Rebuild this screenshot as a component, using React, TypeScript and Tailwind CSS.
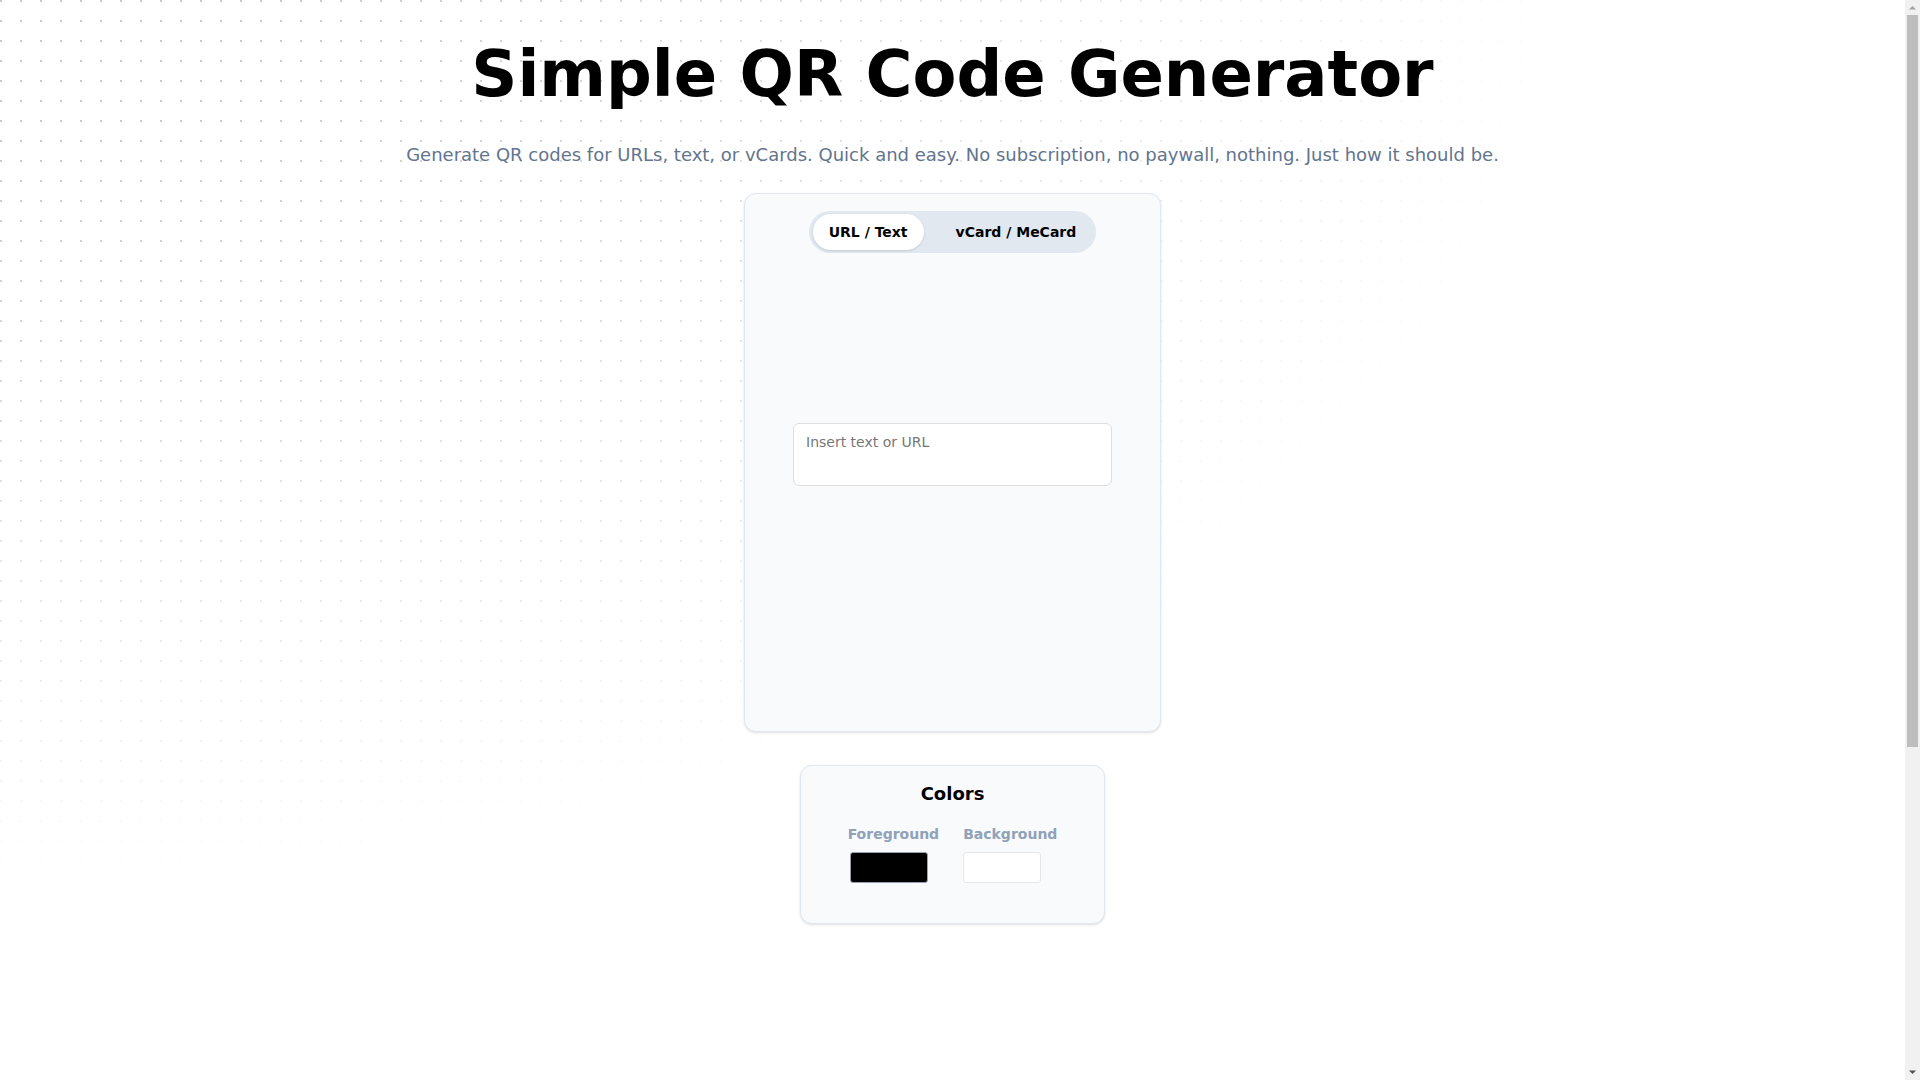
import { useState } from "react";

function ScrollRail() {
  return (
    <div className="flex h-screen w-[15px] shrink-0 flex-col items-center bg-[#f1f1f1]">
      <svg width="15" height="15" viewBox="0 0 15 15" className="shrink-0">
        <path d="M4 9.5 7.5 6 11 9.5Z" fill="#a3a3a3" />
      </svg>
      <div className="h-[732px] w-[11px] shrink-0 bg-[#bdbdbd]" />
      <div className="flex-1" />
      <svg width="15" height="15" viewBox="0 0 15 15" className="shrink-0">
        <path d="M4 5.5 7.5 9 11 5.5Z" fill="#505050" />
      </svg>
    </div>
  );
}

export default function App() {
  const [mode, setMode] = useState<"text" | "vcard">("text");
  const [value, setValue] = useState("");

  return (
    <div className="flex h-screen bg-white font-['DejaVu_Sans',sans-serif] text-black">
      <div className="relative flex-1 overflow-y-auto">
        {/* dotted backdrop, fades out from the top left corner */}
        <div className="pointer-events-none absolute inset-x-0 top-0 h-[1080px] bg-[radial-gradient(circle_at_1px_1px,#c9c9c9_1px,transparent_0)] bg-[size:20px_20px] [mask-image:radial-gradient(ellipse_at_top_left,#000_10%,transparent_60%)]" />

        <main className="relative flex flex-col items-center pt-[42px] pb-[627px]">
          <h1 className="text-[64px] leading-none font-bold tracking-normal">Simple QR Code Generator</h1>
          <p className="mt-[35px] text-lg text-slate-500">
            Generate QR codes for URLs, text, or vCards. Quick and easy. No subscription, no paywall, nothing. Just how
            it should be.
          </p>

          <section className="mt-[24px] flex w-[417px] flex-col items-center rounded-xl border border-slate-200 bg-slate-50 pt-[17px] pb-[245px] shadow-sm">
            <div className="flex gap-4 rounded-full bg-slate-200 px-1 py-[3px]">
              <button
                type="button"
                onClick={() => setMode("text")}
                className={
                  mode === "text"
                    ? "h-9 rounded-full bg-white px-4 text-sm font-bold shadow-sm"
                    : "h-9 rounded-full px-4 text-sm font-bold"
                }
              >
                URL / Text
              </button>
              <button
                type="button"
                onClick={() => setMode("vcard")}
                className={
                  mode === "vcard"
                    ? "h-9 rounded-full bg-white px-4 text-sm font-bold shadow-sm"
                    : "h-9 rounded-full px-4 text-sm font-bold"
                }
              >
                vCard / MeCard
              </button>
            </div>

            <textarea
              value={value}
              onChange={(e) => setValue(e.target.value)}
              placeholder="Insert text or URL"
              className="mt-[170px] h-[63px] w-[319px] resize-none rounded-md border border-[#dedede] bg-white px-3 py-2 text-sm leading-5 outline-none placeholder:text-[#777]"
            />
          </section>

          <section className="mt-[33px] flex w-[305px] flex-col items-center rounded-xl border border-slate-200 bg-slate-50 pt-[14px] pb-10 shadow-sm">
            <h2 className="text-lg leading-7 font-bold">Colors</h2>
            <div className="mt-4 flex gap-6">
              <div>
                <div className="mb-2 text-sm leading-5 font-bold text-slate-400">Foreground</div>
                <div className="ml-0.5 h-[31px] w-[78px] rounded-[3px] border border-gray-400 bg-black" />
              </div>
              <div>
                <div className="mb-2 text-sm leading-5 font-bold text-slate-400">Background</div>
                <div className="h-[31px] w-[78px] rounded-[3px] border border-gray-200 bg-white" />
              </div>
            </div>
          </section>
        </main>
      </div>
      <ScrollRail />
    </div>
  );
}
